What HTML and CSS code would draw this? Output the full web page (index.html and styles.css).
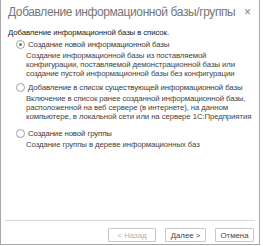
FILE: index.html
```html
<!DOCTYPE html>
<html>
<head>
<meta charset="utf-8">
<title>Добавление информационной базы/группы</title>
<link rel="stylesheet" href="styles.css">
</head>
<body>
<div class="dialog">
  <div class="titlebar">
    <span class="title">Добавление информационной базы/группы</span>
    <span class="close">&#215;</span>
  </div>
  <div class="content">
    <p class="lead">Добавление информационной базы в список.</p>

    <div class="option">
      <div class="option-head">
        <span class="radio checked"></span>
        <span>Создание новой информационной базы</span>
      </div>
      <p class="hint">Создание информационной базы из поставляемой<br>конфигурации, поставляемой демонстрационной базы или<br>создание пустой информационной базы без конфигурации</p>
    </div>

    <div class="option">
      <div class="option-head">
        <span class="radio"></span>
        <span>Добавление в список существующей информационной базы</span>
      </div>
      <p class="hint">Включение в список ранее созданной информационной базы,<br>расположенной на веб сервере (в интернете), на данном<br>компьютере, в локальной сети или на сервере 1С:Предприятия</p>
    </div>

    <div class="option last">
      <div class="option-head">
        <span class="radio"></span>
        <span>Создание новой группы</span>
      </div>
      <p class="hint">Создание группы в дереве информационных баз</p>
    </div>
  </div>
  <div class="footer">
    <input type="button" class="btn back" value="< Назад" disabled>
    <input type="button" class="btn next" value="Далее >">
    <input type="button" class="btn cancel" value="Отмена">
  </div>
</div>
</body>
</html>
```

FILE: styles.css
```css
body {margin:0;background-color:#ffffff;font-family:"Liberation Sans", Arial, sans-serif;}

.dialog {
  width: 258px;
  height: 244px;
  border-left: 1px solid #a8a8a8;
  border-right: 1px solid #a8a8a8;
  border-bottom: 1px solid #a8a8a8;
  display: flex;
  flex-direction: column;
  background-color: #ffffff;
  white-space: nowrap;
}

.titlebar {
  display: flex;
  justify-content: space-between;
  align-items: center;
  height: 24px;
  padding: 0 8px 0 7px;
}
.title {font-size:12px;letter-spacing:-0.4px;color:#767676;}
.close {font-size:12px;color:#808080;}

.content {flex:1;padding:4px 6px 0 7px;font-size:7.8px;color:#3a3a3a;letter-spacing:-0.1px;}
.lead {margin:0 0 1px 0;line-height:10px;color:#222222;}

.option-head {display:flex;align-items:center;gap:3px;margin-left:8px;height:10px;}
.radio {
  flex-shrink: 0;
  width: 7px;
  height: 7px;
  border: 1px solid #a0a0a0;
  border-radius: 50%;
  display: flex;
  align-items: center;
  justify-content: center;
}
.radio.checked::after {
  content: "";
  width: 3px;
  height: 3px;
  border-radius: 50%;
  background-color: #3c9a3c;
}
.hint {margin:2px 0 4px 18px;line-height:9px;color:#444444;}
.option.last {margin-top:7px;}

.footer {
  margin: 0 4px;
  border-top: 1px solid #d8d8d8;
  height: 24px;
  display: flex;
  justify-content: flex-end;
  align-items: flex-start;
  gap: 9px;
  padding: 7px 1px 0 0;
  box-sizing: border-box;
}
.btn {
  font-family: "Liberation Sans", Arial, sans-serif;
  font-size: 7.8px;
  color: #444444;
  background-color: #ffffff;
  border: 1px solid #c8c8c8;
  border-radius: 1px;
  height: 14px;
  padding: 0;
}
.back {width:48px;}
.back:disabled {color:#b0b0b0;}
.next {width:41px;}
.cancel {width:39px;}
```
